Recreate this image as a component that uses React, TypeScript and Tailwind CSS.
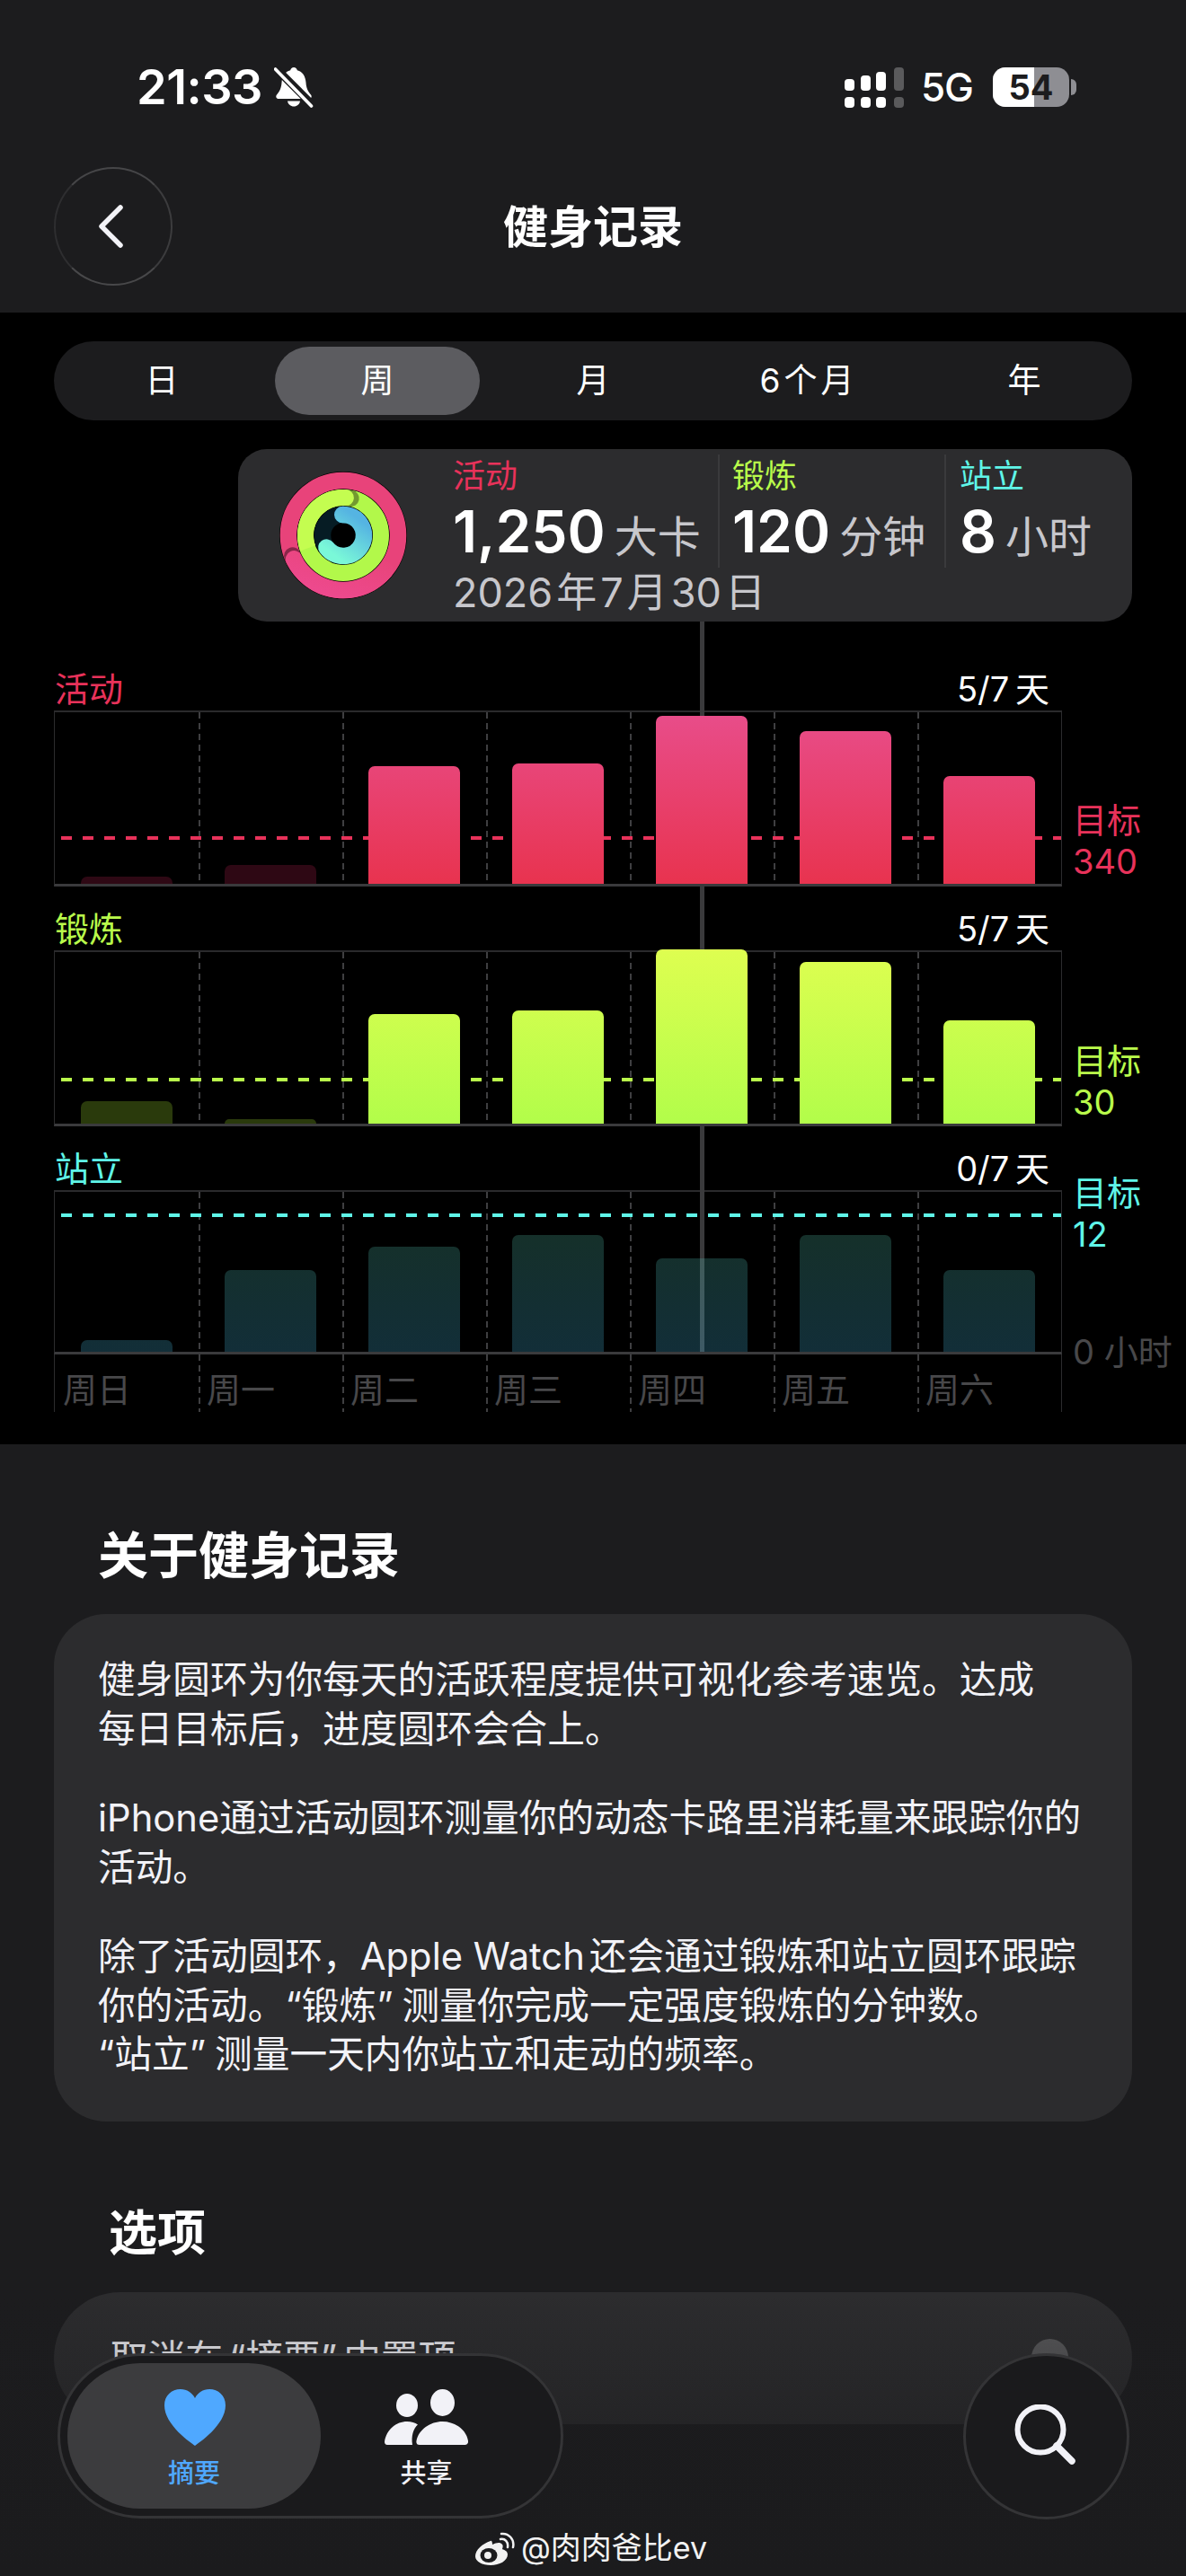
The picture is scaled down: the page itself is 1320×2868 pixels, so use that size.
import React from 'react';

const polar = (r: number, deg: number) => {
    const a = ((deg - 90) * Math.PI) / 180;
    return `${(71 + r * Math.cos(a)).toFixed(2)} ${(71 + r * Math.sin(a)).toFixed(2)}`;
};

const arc = (r: number, from: number, to: number) => {
    const large = to - from > 180 ? 1 : 0;
    return `M${polar(r, from)} A${r} ${r} 0 ${large} 1 ${polar(r, to)}`;
};

const Rings = () => (
    <svg width="142" height="142" viewBox="0 0 142 142" className="shrink-0">
        <defs>
            <linearGradient id="pinkEnd" x1="1" y1="0" x2="0" y2="1">
                <stop offset="0" stopColor="#e8447a" />
                <stop offset="1" stopColor="#ee4a90" />
            </linearGradient>
            <linearGradient id="tealArc" x1="0.7" y1="0" x2="0.1" y2="0.9">
                <stop offset="0" stopColor="#55b4e2" />
                <stop offset="1" stopColor="#7af8d8" />
            </linearGradient>
        </defs>
        <circle cx="71" cy="71" r="71" fill="#000" />
        <circle cx="71" cy="71" r="60.8" fill="none" stroke="#e8437a" strokeWidth="19" />
        <path d={arc(60.8, 235, 248)} fill="none" stroke="#3b1020" strokeOpacity="0.55" strokeWidth="19" strokeLinecap="round" />
        <path d={arc(60.8, 130, 244)} fill="none" stroke="url(#pinkEnd)" strokeWidth="19" strokeLinecap="round" />
        <circle cx="71" cy="71" r="51.7" fill="#000" />
        <circle cx="71" cy="71" r="42" fill="none" stroke="#b2f84a" strokeWidth="18" />
        <path d={arc(42, 8, 12)} fill="none" stroke="#4a5a20" strokeOpacity="0.6" strokeWidth="18" strokeLinecap="round" />
        <path d={arc(42, 250, 359)} fill="none" stroke="#c4fd50" strokeWidth="18" />
        <path d={arc(42, 356, 360) + ' ' + arc(42, 0, 4)} fill="none" stroke="#c4fd50" strokeWidth="18" strokeLinecap="round" />
        <circle cx="71" cy="71" r="32.5" fill="#000" />
        <circle cx="71" cy="71" r="23" fill="none" stroke="#061c24" strokeWidth="18.5" />
        <path d={arc(23, 358, 359.9)} fill="none" stroke="#55b4e2" strokeWidth="18.5" strokeLinecap="round" />
        <path d={arc(23, 0, 234)} fill="none" stroke="url(#tealArc)" strokeWidth="18.5" strokeLinecap="round" />
        <circle cx="71" cy="71" r="13" fill="#000" />
    </svg>
);

const Stat = ({ label, value, unit, labelColor, className }: { label: string, value: string, unit: string, labelColor: string, className: string }) => (
    <div className={className}>
        <p className={`mt-[2px] text-[36px] leading-[44px] ${labelColor}`}>{label}</p>
        <p className="mt-[7px] flex items-baseline whitespace-nowrap">
            <span className="text-[64px] leading-[66px] font-semibold text-white">{value}</span>
            <span className="ml-[10px] text-[48px] leading-[66px] text-[#c7c7cc]">{unit}</span>
        </p>
    </div>
);

const DashLine = () => (
    <div className="absolute left-0 top-0 bottom-0 w-[2px] bg-[repeating-linear-gradient(180deg,#3f3f41_0_7px,transparent_7px_12px)]" />
);

type ChartProps = {
    label: string,
    days: string,
    labelColor: string,
    bars: number[],
    activeClass: string,
    dimClass: string,
    active: boolean[],
    lineClass: string,
    frameClass: string,
    goal: string,
    goalClass: string,
    children?: React.ReactNode,
    side?: React.ReactNode,
};

const Chart = ({ label, days, labelColor, bars, activeClass, dimClass, active, lineClass, frameClass, goal, goalClass, children, side }: ChartProps) => (
    <div className="flex">
        <div className="w-[1122px]">
            <div className="flex h-[44px] items-center justify-between pl-[1px] pr-[14px] mb-[2px] text-[38px] leading-[44px]">
                <span className={labelColor}>{label}</span>
                <span className="text-white [word-spacing:-4px]">{days}</span>
            </div>
            <div className={`relative flex border-x border-x-[#2c2c2e] border-t-2 border-t-[#2a2a2c] border-b-[3px] border-b-[#3a3a3c] ${frameClass}`}>
                {bars.map((h, i) => (
                    <div key={i} className="relative flex flex-1 items-end justify-center">
                        {i > 0 && <DashLine />}
                        <div
                            className={`relative z-10 w-[102px] rounded-t-[7px] ${active[i] ? activeClass : dimClass}`}
                            style={{ height: h }}
                        />
                    </div>
                ))}
                <div className={`absolute left-[7px] right-0 h-[4px] z-[5] ${lineClass}`} />
            </div>
            {children}
        </div>
        <div className={`ml-[12px] ${goalClass} ${labelColor}`}>
            <p className="text-[38px] leading-[46px]">目标</p>
            <p className="text-[38px] leading-[46px]">{goal}</p>
            {side}
        </div>
    </div>
);

const days = ['周日', '周一', '周二', '周三', '周四', '周五', '周六'];

const StatusBar = () => (
    <div className="flex h-[62px] items-center justify-between pl-[152px] pr-[122px] text-white">
        <div className="flex items-center">
            <span className="text-[54px] leading-[62px] font-semibold tracking-[-0.5px]">21:33</span>
            <svg width="44" height="46" viewBox="0 0 44 46" className="ml-[13px]">
                <path d="M22 1c2 0 3.5 1.500 3.800 3.200C32 5.800 35 11 35.500 18c.4 6 2 9.500 5.500 13.500 1.500 2 .5 4.500-2 4.500H5c-2.500 0-3.500-2.500-2-4.500 3.500-4 5-7.500 5.500-13.500C9 11 12 5.800 18.200 4.200 18.500 2.500 20 1 22 1z" fill="#fff" />
                <path d="M15 38.500h14c-.5 3.500-3.500 6-7 6s-6.500-2.500-7-6z" fill="#fff" />
                <path d="M-2 -2L46 46" stroke="#1c1c1e" strokeWidth="9" />
                <path d="M1.500 3L41.500 44" stroke="#fff" strokeWidth="3.600" strokeLinecap="round" />
            </svg>
        </div>
        <div className="flex items-center">
            <svg width="66" height="45" viewBox="0 0 66 45">
                <g fill="#fff">
                    <rect x="0" y="13" width="11" height="13" rx="4" />
                    <rect x="0" y="33" width="11" height="12" rx="4" />
                    <rect x="18" y="9" width="11" height="17" rx="4" />
                    <rect x="18" y="33" width="11" height="12" rx="4" />
                    <rect x="35" y="5" width="11" height="21" rx="4" />
                    <rect x="35" y="33" width="11" height="12" rx="4" />
                </g>
                <rect x="55" y="0" width="11" height="26" rx="4" fill="#5a5a5c" />
                <rect x="55" y="33" width="11" height="12" rx="4" fill="#5a5a5c" />
            </svg>
            <span className="ml-[19px] text-[44px] leading-[62px] font-medium tracking-[-1px]">5G</span>
            <div className="relative ml-[22px] flex h-[44px] w-[85px] rounded-[14px] bg-[#8e8e93]">
                <div className="w-[46px] rounded-l-[14px] bg-white" />
                <span className="absolute inset-0 text-center text-[38px] leading-[44px] font-bold text-[#1c1c1e]">54</span>
            </div>
            <div className="ml-[2px] h-[18px] w-[6px] rounded-r-full bg-[#8e8e93]" />
        </div>
    </div>
);

const HeartIcon = () => (
    <svg width="68" height="63" viewBox="0 0 68 63" className="ml-[2px]">
        <path d="M34 63C30 60 0 40 0 18 0 7 8 0 18 0c7 0 13 4 16 10C37 4 43 0 50 0c10 0 18 7 18 18 0 22-30 42-34 45z" fill="#4fa8ff" />
    </svg>
);

const PeopleIcon = () => (
    <svg width="93" height="62" viewBox="0 0 93 62" fill="#f2f2f7">
        <ellipse cx="25" cy="18" rx="12" ry="13" />
        <ellipse cx="64.500" cy="15" rx="13.500" ry="15" />
        <path d="M3 62c-2 0-3-1.500-3-3.500C2 45 13 36 25 36c5 0 9 1.500 12 3.500C32 44 29.500 52 31 62z" />
        <path d="M39 62c-3 0-4-2-3.500-4.500C38 45 51 36 64.500 36 78 36 91 45 93 57.500c.5 2.500-1 4.500-3.500 4.500z" />
    </svg>
);

const WeiboIcon = () => (
    <svg width="44" height="37" viewBox="0 0 44 37">
        <path d="M17 10C8 13 0 20 0 27c0 6 8 10 17 10 10 0 19-5 19-12 0-4-4-5-6-6 1-3 1-5-1-6-2-2-6-1-10 1 0-3-1-5-2-4z" fill="#f2f2f2" />
        <ellipse cx="15" cy="26" rx="9.500" ry="8" fill="#1c1c1e" />
        <circle cx="14" cy="26" r="4" fill="#f2f2f2" />
        <path d="M28 8c5-1 9 3 8 9M29 2c8-1 15 6 13 15" fill="none" stroke="#f2f2f2" strokeWidth="2.500" strokeLinecap="round" />
    </svg>
);

export default function App() {
    return (
        <div lang="zh-CN" className="relative h-[2868px] w-[1320px] overflow-hidden bg-[#1c1c1e] font-['Inter','Noto_Sans_CJK_SC',sans-serif]">
            <header className="h-[348px] pt-[66px]">
                <StatusBar />
                <div className="mt-[58px] grid grid-cols-[132px_1fr_132px] items-center px-[60px]">
                    <div className="flex h-[132px] w-[132px] items-center justify-center rounded-full border-2 border-t-[#464648] border-r-[#3c3c3e] border-b-[#48484a] border-l-[#2e2e30]">
                        <svg width="32" height="52" viewBox="0 0 32 52" className="mr-[8px]">
                            <path d="M28 5L7 26l21 21" fill="none" stroke="#f2f2f7" strokeWidth="5.500" strokeLinecap="round" strokeLinejoin="round" />
                        </svg>
                    </div>
                    <h1 className="pt-[2px] text-center text-[50px] leading-[60px] font-semibold text-white">健身记录</h1>
                </div>
            </header>

            <section className="relative h-[1260px] bg-black pt-[32px]">
                <div className="mx-[60px] grid h-[88px] grid-cols-5 rounded-full bg-[#1c1c1e] text-[37px] text-white">
                    {['日', '周', '月', '6个月', '年'].map((t, i) => (
                        <div key={t} className="p-[6px]">
                            <div className={`flex h-full items-center justify-center rounded-full ${i === 1 ? 'bg-[#5c5c60]' : ''} ${i === 3 ? 'tracking-[4px]' : ''}`}>{t}</div>
                        </div>
                    ))}
                </div>

                <div className="ml-[265px] mr-[60px] mt-[32px] flex h-[192px] rounded-[32px] bg-[#2c2c2e] pl-[46px]">
                    <div className="flex items-center"><Rings /></div>
                    <div className="ml-[51px] pt-[6px]">
                        <div className="flex h-[126px]">
                            <Stat className="w-[295px]" label="活动" value="1,250" unit="大卡" labelColor="text-[#e8325a]" />
                            <Stat className="w-[252px] border-l-2 border-l-[#3a3a3c] pl-[14px]" label="锻炼" value="120" unit="分钟" labelColor="text-[#b9fb4b]" />
                            <Stat className="border-l-2 border-l-[#3a3a3c] pl-[15px]" label="站立" value="8" unit="小时" labelColor="text-[#5ff5e8]" />
                        </div>
                        <p className="mt-[2px] whitespace-nowrap text-[45px] leading-[52px] text-[#c7c7cc]">
                            2026<span className="mx-[4px]">年</span>7<span className="mx-[4px]">月</span>30<span className="ml-[4px]">日</span>
                        </p>
                    </div>
                </div>

                <div className="ml-[60px] mt-[53px]">
                    <Chart
                        label="活动"
                        days="5/7 天"
                        labelColor="text-[#e8325a]"
                        bars={[8, 21, 131, 134, 187, 170, 120]}
                        active={[false, false, true, true, true, true, true]}
                        activeClass="bg-[linear-gradient(180deg,#e84d8a,#e8334f)] bg-bottom bg-[length:100%_190px]"
                        dimClass="bg-[#2e0814]"
                        lineClass="bottom-[49px] bg-[repeating-linear-gradient(90deg,#e8325a_0_12px,transparent_12px_24px)]"
                        frameClass="h-[196px]"
                        goal="340"
                        goalClass="pt-[145px]"
                    />
                    <div className="mt-[25px]">
                        <Chart
                            label="锻炼"
                            days="5/7 天"
                            labelColor="text-[#b9fb4b]"
                            bars={[25, 5, 122, 126, 194, 180, 115]}
                            active={[false, false, true, true, true, true, true]}
                            activeClass="bg-[linear-gradient(180deg,#defe50,#b2fd4a)] bg-bottom bg-[length:100%_194px]"
                            dimClass="bg-[#2a3a0c]"
                            lineClass="bottom-[47px] bg-[repeating-linear-gradient(90deg,#b9fb4b_0_12px,transparent_12px_24px)]"
                            frameClass="h-[196px]"
                            goal="30"
                            goalClass="pt-[146px]"
                        />
                    </div>
                    <div className="mt-[25px]">
                        <Chart
                            label="站立"
                            days="0/7 天"
                            labelColor="text-[#5ff5e8]"
                            bars={[13, 91, 117, 130, 104, 130, 91]}
                            active={[false, false, false, false, false, false, false]}
                            activeClass=""
                            dimClass="bg-[linear-gradient(180deg,rgba(84,192,168,0.25),rgba(72,184,224,0.25))] bg-bottom bg-[length:100%_130px]"
                            lineClass="top-[24px] bg-[repeating-linear-gradient(90deg,#5ff5e8_0_12px,transparent_12px_24px)]"
                            frameClass="h-[183px]"
                            goal="12"
                            goalClass="pt-[26px]"
                            side={<p className="mt-[85px] whitespace-nowrap text-[38px] leading-[46px] text-[#48484a]">0 小时</p>}
                        >
                            <div className="flex h-[64px] border-x border-x-[#2c2c2e]">
                                {days.map((d, i) => (
                                    <div key={d} className="relative flex-1 pl-[9px] pt-[17px] text-[38px] leading-[44px] text-[#48484a]">
                                        {i > 0 && <DashLine />}
                                        {d}
                                    </div>
                                ))}
                            </div>
                        </Chart>
                    </div>
                </div>

                {/* selected day cursor, runs behind the bars */}
                <div className="absolute left-[779px] top-[344px] z-[1] h-[815px] w-[5px] bg-[#3a3a3c]" />
            </section>

            <section className="pt-[90px]">
                <h2 className="pl-[109px] text-[56px] leading-[68px] font-bold text-white">关于健身记录</h2>
                <div className="mx-[60px] mt-[31px] rounded-[58px] bg-[#2c2c2e] px-[49px] pb-[47px] pt-[46px] text-[41.7px] leading-[54.5px] whitespace-nowrap text-[#f2f2f7]">
                    <p>健身圆环为你每天的活跃程度提供可视化参考速览。达成<br />每日目标后，进度圆环会合上。</p>
                    <p className="mt-[45px]">iPhone通过活动圆环测量你的动态卡路里消耗量来跟踪你的<br />活动。</p>
                    <p className="mt-[45px]">除了活动圆环，Apple Watch<span className="ml-[5px]">还会通过锻炼和站立圆环跟踪</span><br />你的活动。“锻炼”<span className="ml-[10px]">测量你完成一定强度锻炼的分钟数。</span><br />“站立”<span className="ml-[10px]">测量一天内你站立和走动的频率。</span></p>
                </div>
                <h2 className="mt-[91px] pl-[121px] text-[54px] leading-[68px] font-bold text-white">选项</h2>
                <div className="mx-[60px] mt-[31px] flex h-[147px] justify-between rounded-[74px] bg-[#2c2c2e] pl-[63px] pr-[71px] pt-[47px]">
                    <span className="text-[41.7px] leading-[54px] text-[#f2f2f7]">取消在<span className="mx-[7px]">“摘要”</span>中置顶</span>
                    <div className="mt-[5px] h-[41px] w-[41px] rounded-full bg-[#58585a]" />
                </div>
            </section>

            {/* fade under the floating bar */}
            <div className="absolute inset-x-0 bottom-0 h-[315px] bg-[linear-gradient(180deg,transparent,#1b1b1d_100%)]" />

            <nav className="absolute left-[64px] top-[2620px] flex h-[184px] w-[563px] rounded-full border-[3px] border-[#343436] bg-[#1a1a1c] p-[8px]">
                <div className="flex h-full w-[282px] flex-col items-center rounded-full bg-[#3c3c3e] pt-[29px]">
                    <HeartIcon />
                    <span className="mt-[12px] text-[29px] leading-[38px] font-medium text-[#4fa8ff]">摘要</span>
                </div>
                <div className="flex h-full flex-col items-center pl-[71px] pt-[29px]">
                    <PeopleIcon />
                    <span className="mt-[13px] text-[29px] leading-[38px] font-medium text-[#f2f2f7]">共享</span>
                </div>
            </nav>

            <div className="absolute left-[1072px] top-[2620px] flex h-[185px] w-[185px] items-center justify-center rounded-full border-[3px] border-[#343436] bg-[#1a1a1c]">
                <svg width="72" height="72" viewBox="0 0 72 72">
                    <circle cx="29" cy="28" r="25.500" fill="none" stroke="#f2f2f7" strokeWidth="6" />
                    <path d="M47 46l17 17" stroke="#f2f2f7" strokeWidth="7.500" strokeLinecap="round" />
                </svg>
            </div>

            <div className="absolute left-[529px] top-[2816px] flex items-center text-[34px] leading-[42px] text-[#f2f2f2]">
                <WeiboIcon />
                <span className="ml-[7px] whitespace-nowrap">@肉肉爸比ev</span>
            </div>
        </div>
    );
}
